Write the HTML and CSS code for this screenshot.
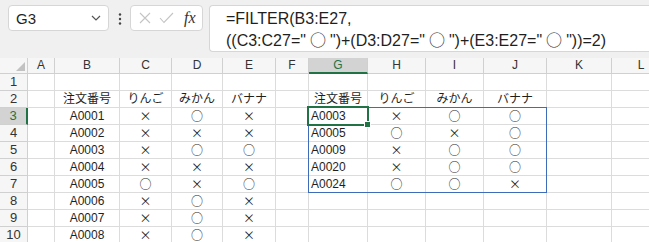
FILE: index.html
```html
<!DOCTYPE html>
<html lang="ja">
<head>
  <meta charset="UTF-8">
  <title>FILTER</title>
  <link rel="stylesheet" href="styles.css">
</head>
<body>
  <div class="formula-bar">
    <div class="namebox">
      <span>G3</span>
      <svg class="chevron" width="10" height="6" viewBox="0 0 10 6"><polyline points="1,1 5,5 9,1" fill="none" stroke="#555" stroke-width="1.2"/></svg>
    </div>
    <div class="dots">
      <svg width="4" height="12" viewBox="0 0 4 12"><circle cx="2" cy="1.5" r="1.2" fill="#444"/><circle cx="2" cy="6" r="1.2" fill="#444"/><circle cx="2" cy="10.5" r="1.2" fill="#444"/></svg>
    </div>
    <div class="fnbox">
      <svg width="12" height="12" viewBox="0 0 12 12"><path d="M1 1 L11 11 M11 1 L1 11" stroke="#c4c4c4" stroke-width="1.1" fill="none"/></svg>
      <svg width="15" height="12" viewBox="0 0 15 12"><polyline points="1,6 5,10.5 14,1" fill="none" stroke="#c4c4c4" stroke-width="1.1"/></svg>
      <span class="fx">fx</span>
    </div>
    <div class="formula">=FILTER(B3:E27,<br>((C3:C27="<span class="o">○</span>")+(D3:D27="<span class="o">○</span>")+(E3:E27="<span class="o">○</span>"))=2)</div>
  </div>

  <div class="sheet-wrap">
    <div class="sheet">
      <!-- column headers -->
      <div class="ch corner"><span class="tri"></span></div>
      <div class="ch">A</div><div class="ch">B</div><div class="ch">C</div><div class="ch">D</div>
      <div class="ch">E</div><div class="ch">F</div><div class="ch active-col">G</div><div class="ch">H</div>
      <div class="ch">I</div><div class="ch">J</div><div class="ch">K</div><div class="ch">L</div>

      <!-- row 1 -->
      <div class="rh">1</div>
      <div class="c"></div><div class="c"></div><div class="c"></div><div class="c"></div><div class="c"></div><div class="c"></div>
      <div class="c"></div><div class="c"></div><div class="c"></div><div class="c"></div><div class="c"></div><div class="c"></div>

      <!-- row 2 -->
      <div class="rh">2</div>
      <div class="c"></div><div class="c m">注文番号</div><div class="c m">りんご</div><div class="c m">みかん</div><div class="c m">バナナ</div><div class="c"></div>
      <div class="c m">注文番号</div><div class="c m">りんご</div><div class="c m">みかん</div><div class="c m">バナナ</div><div class="c"></div><div class="c"></div>

      <!-- row 3 -->
      <div class="rh active-row">3</div>
      <div class="c"></div><div class="c m">A0001</div><div class="c m s">×</div><div class="c m s">○</div><div class="c m s">×</div><div class="c"></div>
      <div class="c">A0003</div><div class="c m s">×</div><div class="c m s">○</div><div class="c m s">○</div><div class="c"></div><div class="c"></div>

      <!-- row 4 -->
      <div class="rh">4</div>
      <div class="c"></div><div class="c m">A0002</div><div class="c m s">×</div><div class="c m s">×</div><div class="c m s">×</div><div class="c"></div>
      <div class="c">A0005</div><div class="c m s">○</div><div class="c m s">×</div><div class="c m s">○</div><div class="c"></div><div class="c"></div>

      <!-- row 5 -->
      <div class="rh">5</div>
      <div class="c"></div><div class="c m">A0003</div><div class="c m s">×</div><div class="c m s">○</div><div class="c m s">○</div><div class="c"></div>
      <div class="c">A0009</div><div class="c m s">×</div><div class="c m s">○</div><div class="c m s">○</div><div class="c"></div><div class="c"></div>

      <!-- row 6 -->
      <div class="rh">6</div>
      <div class="c"></div><div class="c m">A0004</div><div class="c m s">×</div><div class="c m s">×</div><div class="c m s">×</div><div class="c"></div>
      <div class="c">A0020</div><div class="c m s">×</div><div class="c m s">○</div><div class="c m s">○</div><div class="c"></div><div class="c"></div>

      <!-- row 7 -->
      <div class="rh">7</div>
      <div class="c"></div><div class="c m">A0005</div><div class="c m s">○</div><div class="c m s">×</div><div class="c m s">○</div><div class="c"></div>
      <div class="c">A0024</div><div class="c m s">○</div><div class="c m s">○</div><div class="c m s">×</div><div class="c"></div><div class="c"></div>

      <!-- row 8 -->
      <div class="rh">8</div>
      <div class="c"></div><div class="c m">A0006</div><div class="c m s">×</div><div class="c m s">○</div><div class="c m s">×</div><div class="c"></div>
      <div class="c"></div><div class="c"></div><div class="c"></div><div class="c"></div><div class="c"></div><div class="c"></div>

      <!-- row 9 -->
      <div class="rh">9</div>
      <div class="c"></div><div class="c m">A0007</div><div class="c m s">×</div><div class="c m s">○</div><div class="c m s">×</div><div class="c"></div>
      <div class="c"></div><div class="c"></div><div class="c"></div><div class="c"></div><div class="c"></div><div class="c"></div>

      <!-- row 10 -->
      <div class="rh">10</div>
      <div class="c"></div><div class="c m">A0008</div><div class="c m s">×</div><div class="c m s">○</div><div class="c m s">×</div><div class="c"></div>
      <div class="c"></div><div class="c"></div><div class="c"></div><div class="c"></div><div class="c"></div><div class="c"></div>
    </div>

    <!-- spill range and active cell, laid on the same grid -->
    <div class="sheet overlay">
      <div class="spill"></div>
      <div class="active-cell"><span class="handle"></span></div>
    </div>
  </div>
</body>
</html>
```

FILE: styles.css
```css
body {
  margin: 0;
  background-color: #fff;
  font-family: "Liberation Sans", "Noto Sans CJK JP", sans-serif;
  color: #1f1f1f;
  overflow: hidden;
}

/* formula bar */
.formula-bar {
  display: flex;
  align-items: flex-start;
  height: 58px;
  padding: 5px 0 0 8px;
  box-sizing: border-box;
  background-color: #f0f0f0;
}
.namebox {
  display: flex;
  align-items: center;
  justify-content: space-between;
  width: 101px;
  height: 26px;
  padding: 0 7px 0 7px;
  box-sizing: border-box;
  background-color: #fff;
  border: 1px solid #d6d6d6;
  border-radius: 4px;
  font-size: 15px;
}
.dots {
  display: flex;
  justify-content: center;
  width: 21px;
  padding-top: 8px;
}
.fnbox {
  display: flex;
  align-items: center;
  gap: 8px;
  width: 73px;
  height: 26px;
  padding-left: 8px;
  box-sizing: border-box;
  background-color: #fff;
  border: 1px solid #d6d6d6;
  border-radius: 4px;
}
.fx {
  font-family: "Liberation Serif", serif;
  font-style: italic;
  font-size: 16px;
  color: #333;
  margin-left: 2px;
}
.formula {
  flex: 1;
  height: 47px;
  margin-left: 6px;
  padding: 2px 0 0 16px;
  box-sizing: border-box;
  background-color: #fff;
  border: 1px solid #d6d6d6;
  border-right: none;
  border-radius: 4px 0 0 4px;
  font-size: 16px;
  line-height: 21px;
  white-space: nowrap;
}
.formula .o {
  font-family: "Noto Sans CJK JP", sans-serif;
  margin: 0 4px;
}

/* worksheet */
.sheet-wrap {
  position: relative;
}
.sheet {
  display: grid;
  grid-template-columns: 28px 27px 65px 52px 51px 53px 33px 59px 58px 58px 63px 65px 59px;
  grid-template-rows: 16px repeat(10, 17px);
  font-size: 12px;
}
.ch, .rh, .c {
  box-sizing: border-box;
  border-right: 1px solid #dcdcdc;
  border-bottom: 1px solid #dcdcdc;
  white-space: nowrap;
  overflow: hidden;
}
.ch {
  background-color: #f6f6f6;
  text-align: center;
  line-height: 15px;
  color: #333;
  border-color: #d0d0d0;
}
.rh {
  background-color: #f6f6f6;
  text-align: center;
  line-height: 16px;
  color: #333;
  border-color: #d0d0d0;
  font-size: 13px;
}
.corner {
  position: relative;
}
.tri {
  position: absolute;
  right: 2px;
  bottom: 2px;
  width: 0;
  height: 0;
  border-left: 9px solid transparent;
  border-bottom: 9px solid #c2c2c2;
}
.active-col {
  background-color: #d3d3d3;
  color: #217346;
  border-bottom: 2px solid #217346;
}
.active-row {
  background-color: #d3d3d3;
  color: #217346;
  border-right: 2px solid #217346;
}
.c {
  line-height: 16px;
  padding-left: 2px;
}
.m {
  text-align: center;
  padding-left: 0;
}
.s {
  font-family: "Noto Sans CJK JP", sans-serif;
}

.overlay {
  position: absolute;
  inset: 0;
  pointer-events: none;
}
.spill {
  grid-column: 8 / 12;
  grid-row: 4 / 9;
  margin: -1px 0 0 -1px;
  border: 1px solid #3f6cb8;
}
.active-cell {
  grid-column: 8 / 9;
  grid-row: 4 / 5;
  margin: -2px -1px -1px -2px;
  border: 2px solid #217346;
  position: relative;
}
.handle {
  position: absolute;
  right: -4px;
  bottom: -4px;
  width: 5px;
  height: 5px;
  background-color: #217346;
  border: 1px solid #fff;
}
```
